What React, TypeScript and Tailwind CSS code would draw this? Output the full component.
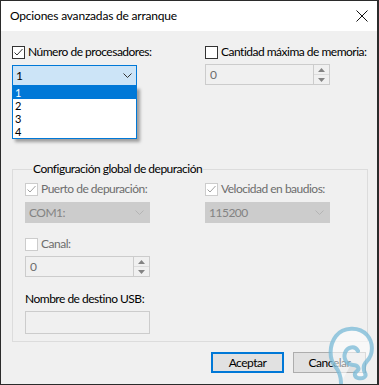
import React from "react";

const font = { fontFamily: '"Segoe UI", Lato, "Noto Sans", sans-serif' };

function Check({ checked, disabled }: { checked?: boolean; disabled?: boolean }) {
  return (
    <span
      className={
        "w-[13px] h-[13px] shrink-0 border flex items-center justify-center " +
        (disabled ? "border-[#cccccc] bg-white" : "border-[#333333] bg-white")
      }
    >
      {checked && (
        <svg width="11" height="11" viewBox="0 0 11 11">
          <polyline
            points="1.5,5.5 4,8 9.5,2"
            fill="none"
            stroke={disabled ? "#a0a0a0" : "#333333"}
            strokeWidth="1"
          />
        </svg>
      )}
    </span>
  );
}

function Chevron({ color }: { color: string }) {
  return (
    <svg width="9" height="5" viewBox="0 0 9 5">
      <polyline points="0.5,0.5 4.5,4.5 8.5,0.5" fill="none" stroke={color} strokeWidth="1" />
    </svg>
  );
}

function Spinner({ value }: { value: string }) {
  return (
    <div className="w-[125px] h-[21px] border border-[#cccccc] bg-[#f0f0f0] flex">
      <span className="flex-1 pl-[4px] text-[12px] leading-[19px] text-[#6d6d6d]">{value}</span>
      <div className="w-[16px] flex flex-col border-l border-[#cccccc]">
        <div className="flex-1 flex items-center justify-center border-b border-[#dcdcdc]">
          <svg width="7" height="4" viewBox="0 0 7 4">
            <polygon points="0,4 7,4 3.5,0" fill="#838383" />
          </svg>
        </div>
        <div className="flex-1 flex items-center justify-center">
          <svg width="7" height="4" viewBox="0 0 7 4">
            <polygon points="0,0 7,0 3.5,4" fill="#838383" />
          </svg>
        </div>
      </div>
    </div>
  );
}

function GrayCombo({ value }: { value: string }) {
  return (
    <div className="w-[125px] h-[21px] bg-[#cccccc] border border-[#cccccc] flex items-center justify-between pl-[3px] pr-[5px]">
      <span className="text-[12px] text-[#838383]">{value}</span>
      <Chevron color="#b4b4b4" />
    </div>
  );
}

export default function App() {
  return (
    <div
      style={font}
      className="w-[379px] h-[385px] border border-r-2 border-[#2b2b2b] bg-[#f0f0f0] flex flex-col text-[12px] tracking-[-0.5px] text-black relative overflow-hidden"
    >
      <div className="h-[30px] bg-white flex items-center justify-between pl-[9px] pr-[9px]">
        <span className="text-[12px] tracking-[-0.2px]">Opciones avanzadas de arranque</span>
        <svg width="12" height="12" viewBox="0 0 12 12">
          <path d="M0.5,0.5 L11.5,11.5 M11.5,0.5 L0.5,11.5" stroke="#111" strokeWidth="1" />
        </svg>
      </div>

      <div className="flex-1 flex flex-col px-[11px]">
        <div className="mt-[14px] grid grid-cols-[193px_1fr]">
          <div className="flex flex-col relative">
            <label className="h-[14px] flex items-center gap-[3px]">
              <Check checked />
              <span>Número de procesadores:</span>
            </label>
            <div className="mt-[6px] w-[125px] h-[21px] bg-[#cce4f7] border border-[#0078d7] flex items-center justify-between pl-[3px] pr-[4px]">
              <span>1</span>
              <Chevron color="#333333" />
            </div>
            <ul className="absolute top-[41px] left-0 w-[125px] bg-white border border-[#0078d7] border-t-0 shadow-[3px_3px_3px_rgba(0,0,0,0.35)] z-10 text-[11px]">
              <li className="h-[13px] leading-[13px] pl-[2px] bg-[#0078d7] text-white">1</li>
              <li className="h-[13px] leading-[13px] pl-[2px]">2</li>
              <li className="h-[13px] leading-[13px] pl-[2px]">3</li>
              <li className="h-[13px] leading-[13px] pl-[2px]">4</li>
            </ul>
          </div>
          <div className="flex flex-col">
            <label className="h-[14px] flex items-center gap-[3px] whitespace-nowrap">
              <Check />
              <span>Cantidad máxima de memoria:</span>
            </label>
            <div className="mt-[5px]">
              <Spinner value="0" />
            </div>
          </div>
        </div>

        <fieldset className="mt-[75px] w-[356px] h-[181px] border border-[#dcdcdc] px-[12px]">
          <legend className="px-[1px] ml-[7px] leading-[16px]">Configuración global de depuración</legend>
          <div className="mt-[5px] grid grid-cols-[180px_1fr]">
            <div className="flex flex-col">
              <label className="h-[14px] flex items-center gap-[3px] text-[#6d6d6d]">
                <Check checked disabled />
                <span>Puerto de depuración:</span>
              </label>
              <div className="mt-[6px]">
                <GrayCombo value="COM1:" />
              </div>
            </div>
            <div className="flex flex-col">
              <label className="h-[14px] flex items-center gap-[3px] text-[#6d6d6d]">
                <Check checked disabled />
                <span>Velocidad en baudios:</span>
              </label>
              <div className="mt-[6px]">
                <GrayCombo value="115200" />
              </div>
            </div>
          </div>
          <label className="mt-[14px] h-[14px] flex items-center gap-[3px] text-[#6d6d6d]">
            <Check disabled />
            <span>Canal:</span>
          </label>
          <div className="mt-[5px]">
            <Spinner value="0" />
          </div>
          <div className="mt-[14px] leading-[16px]">Nombre de destino USB:</div>
          <div className="mt-[4px] w-[125px] h-[23px] border border-[#cccccc] bg-[#f0f0f0]" />
        </fieldset>

        <div className="mt-[10px] flex justify-end gap-[9px]">
          <button className="w-[73px] h-[21px] border-2 border-[#0078d7] bg-[#e1e1e1] text-[12px] leading-none">
            Aceptar
          </button>
          <button className="w-[73px] h-[21px] border border-[#adadad] bg-[#e1e1e1] text-[12px] leading-none">
            Cancelar
          </button>
        </div>
      </div>

      <svg
        className="absolute left-[326px] top-[322px] pointer-events-none"
        width="48"
        height="62"
        viewBox="0 0 48 62"
      >
        <path
          d="M14,60 C14,52 12,48 8,43 C2,36 2,22 9,13 C16,4 32,3 40,12 C47,20 46,32 40,38 C36,42 36,46 38,50 C40,54 36,56 31,55 C27,54 27,50 30,48 C33,46 31,42 26,42 C20,42 16,36 18,30 C20,24 28,22 31,28"
          fill="rgba(255,255,255,0.55)"
          stroke="rgba(120,185,215,0.75)"
          strokeWidth="4"
          strokeLinecap="round"
        />
      </svg>
    </div>
  );
}
